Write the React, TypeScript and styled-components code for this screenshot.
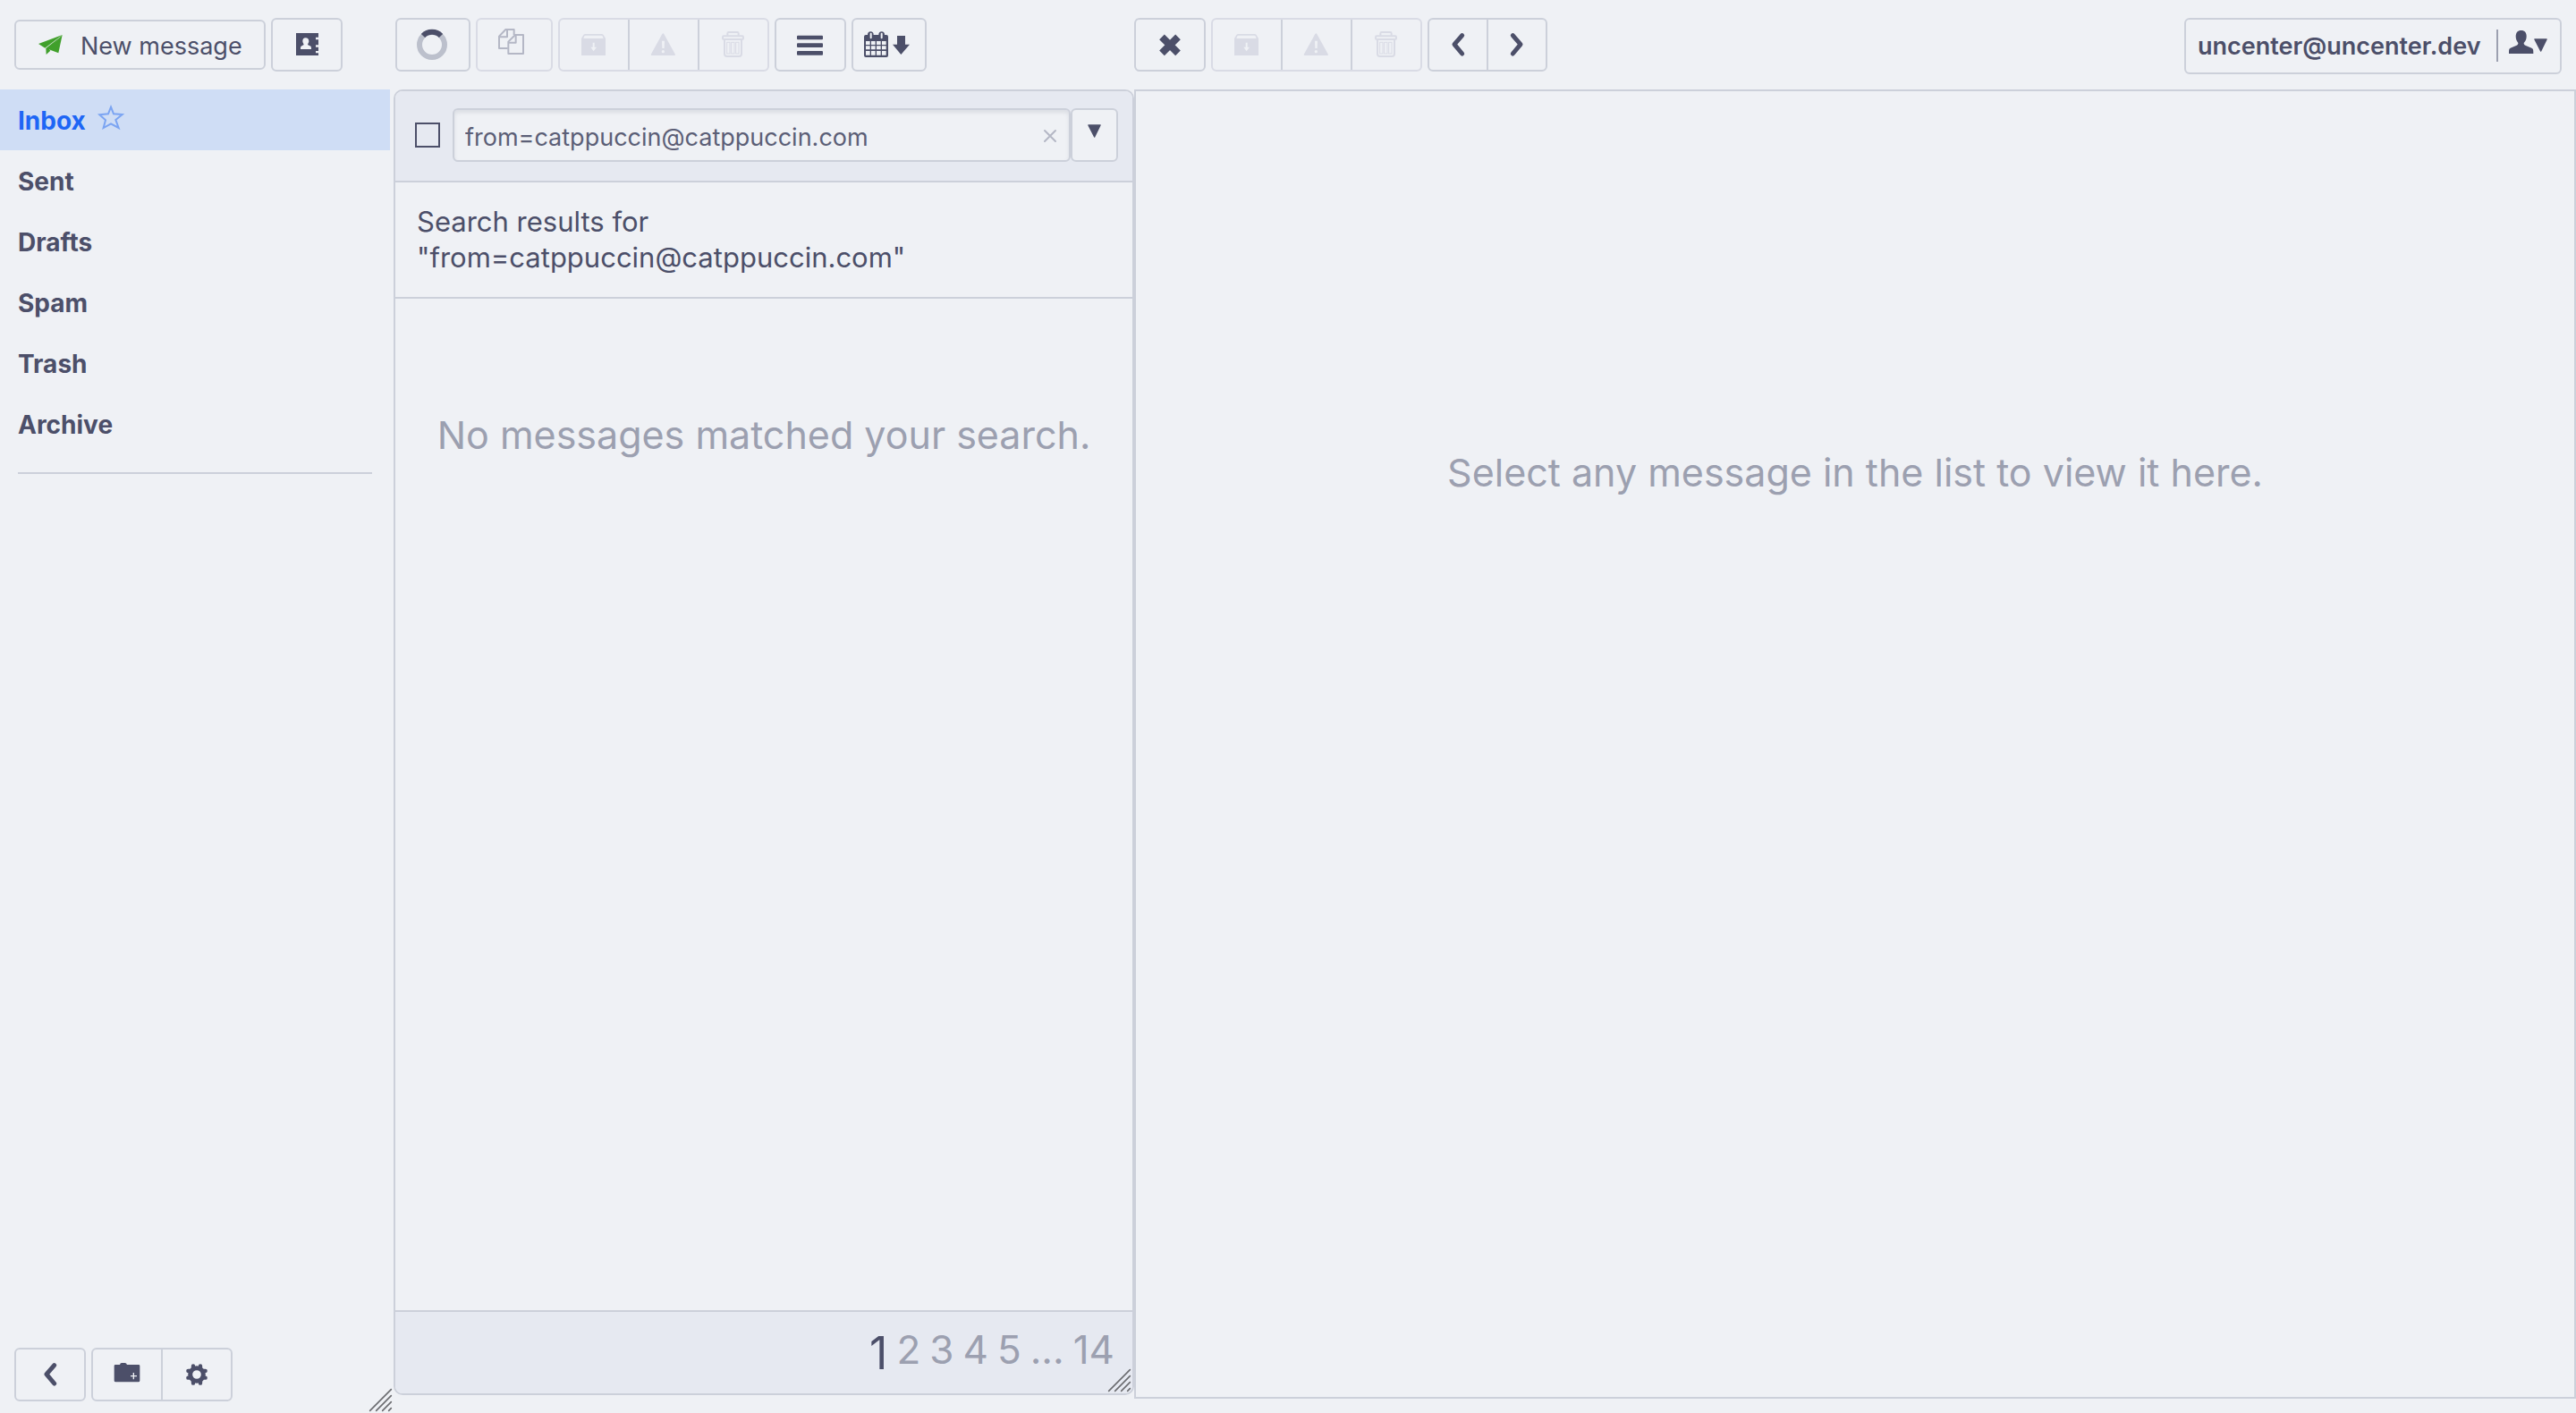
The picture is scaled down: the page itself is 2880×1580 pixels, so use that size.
import React from "react";
import styled, { createGlobalStyle, css } from "styled-components";

const color = {
  base: "#eff1f5",
  mantle: "#e6e9f1",
  border: "#ccd0da",
  faint: "#d9dbe5",
  text: "#4c4f69",
  subtext: "#5c5f77",
  overlay: "#9ca0b0",
  muted: "#b4b7c5",
  blue: "#1e66f5",
  selected: "#cfddf5",
  green: "#40a02b",
};

const GlobalStyle = createGlobalStyle`
  *, *::before, *::after { box-sizing: border-box; }
  html, body, #root { height: 100%; }
  body {
    margin: 0;
    background: ${color.base};
    color: ${color.text};
    font-family: Inter, "Liberation Sans", sans-serif;
    font-size: 27px;
    line-height: 40px;
  }
  button, input { font: inherit; color: inherit; margin: 0; }
  svg { display: block; flex: none; overflow: visible; }
`;

const Page = styled.div`
  display: grid;
  grid-template-columns: 440px 828px minmax(0, 1fr);
  grid-template-rows: 100px minmax(0, 1fr);
  height: 100vh;
`;

const Toolbar = styled.header<{ $inset: number }>`
  display: flex;
  align-items: flex-start;
  gap: 6px;
  padding: 20px 16px 0 ${(p) => p.$inset}px;
`;

const frame = css`
  border: 2px solid ${color.border};
  border-radius: 6px;
  background: ${color.base};
`;

const Button = styled.button<{ $width: number }>`
  ${frame}
  display: flex;
  align-items: center;
  justify-content: center;
  flex: none;
  width: ${(p) => p.$width}px;
  height: 60px;
  padding: 0;
  &:disabled { border-color: ${color.faint}; color: ${color.muted}; }
`;

const ComposeButton = styled.button`
  ${frame}
  display: flex;
  align-items: center;
  gap: 20px;
  width: 281px;
  height: 56px;
  margin-top: 2px;
  padding: 4px 24px 0 25px;
  white-space: nowrap;
  svg { color: ${color.green}; margin-bottom: 4px; }
`;

const Group = styled.div<{ $faint?: boolean }>`
  ${frame}
  display: flex;
  height: 60px;
  border-color: ${(p) => (p.$faint ? color.faint : color.border)};
`;

const Segment = styled.button<{ $width: number }>`
  display: flex;
  align-items: center;
  justify-content: center;
  box-sizing: content-box;
  width: ${(p) => p.$width}px;
  padding: 0;
  border: 0;
  background: none;
  & + & { border-left: 2px solid ${color.border}; }
  &:disabled { color: ${color.faint}; }
`;

const AccountButton = styled.button`
  ${frame}
  display: flex;
  align-items: center;
  justify-content: space-between;
  min-width: 422px;
  height: 63px;
  margin-left: auto;
  padding: 0 14px 0 13px;
  font-weight: 600;
`;

const AccountIcons = styled.span`
  display: flex;
  align-items: center;
  height: 36px;
  margin-bottom: 2px;
  padding-left: 12px;
  border-left: 2px solid ${color.overlay};
  svg:first-child { margin-bottom: 8px; }
`;

const Sidebar = styled.aside`
  position: relative;
  display: flex;
  flex-direction: column;
  width: 436px;
`;

const FolderLink = styled.a<{ $active?: boolean }>`
  display: flex;
  align-items: center;
  gap: 14px;
  height: 68px;
  padding: 2px 20px 0;
  font-size: 28px;
  font-weight: 700;
  text-decoration: none;
  color: ${(p) => (p.$active ? color.blue : color.text)};
  background: ${(p) => (p.$active ? color.selected : "transparent")};
  svg { color: #7ba4f2; margin-bottom: 8px; }
`;

const Rule = styled.hr`
  width: 396px;
  margin: 20px;
  border: 0;
  border-top: 2px solid ${color.border};
`;

const SidebarTools = styled.div`
  display: flex;
  gap: 6px;
  margin-top: auto;
  padding: 0 16px 13px;
`;

const ListPanel = styled.section`
  position: relative;
  display: flex;
  flex-direction: column;
  margin-bottom: 20px;
  border: 2px solid ${color.border};
  border-radius: 10px;
  overflow: hidden;
`;

const SearchBar = styled.form`
  display: flex;
  align-items: center;
  height: 102px;
  padding: 0 16px 2px 22px;
  background: ${color.mantle};
  border-bottom: 2px solid ${color.border};
`;

const Checkbox = styled.input`
  appearance: none;
  flex: none;
  width: 28px;
  height: 28px;
  margin: 0 14px 0 0;
  border: 2px solid ${color.text};
`;

const SearchField = styled.div`
  ${frame}
  display: flex;
  align-items: center;
  flex: 1;
  height: 60px;
  box-shadow: inset 0 3px 4px rgba(76, 79, 105, 0.12);
`;

const SearchInput = styled.input`
  flex: 1;
  min-width: 0;
  height: 100%;
  padding: 4px 0 0 12px;
  border: 0;
  outline: 0;
  background: none;
  color: ${color.subtext};
`;

const ClearButton = styled.button`
  width: 42px;
  height: 56px;
  padding: 2px 14px 0;
  border: 0;
  background: none;
  color: ${color.muted};
`;

const ResultsHeading = styled.h2`
  margin: 0;
  padding: 24px;
  border-bottom: 2px solid ${color.border};
  font-size: 31px;
  font-weight: 400;
  line-height: 40px;
`;

const Placeholder = styled.p<{ $top: number }>`
  flex: 1;
  margin: 0;
  padding-top: ${(p) => p.$top}px;
  text-align: center;
  color: ${color.overlay};
  font-size: 43px;
  line-height: 60px;
`;

const Pager = styled.nav`
  display: flex;
  justify-content: flex-end;
  gap: 10px;
  height: 93px;
  padding: 12px 20px 0;
  border-top: 2px solid ${color.border};
  background: ${color.mantle};
  line-height: 60px;
`;

const PageLink = styled.a<{ $current?: boolean }>`
  color: ${(p) => (p.$current ? color.text : color.overlay)};
  font-size: ${(p) => (p.$current ? 50 : 44)}px;
  padding-top: ${(p) => (p.$current ? 4 : 0)}px;
  text-decoration: none;
`;

const Preview = styled.main`
  display: flex;
  margin-bottom: 16px;
  border: 2px solid ${color.border};
`;

const GripCorner = styled.span<{ $right: number }>`
  position: absolute;
  right: ${(p) => p.$right}px;
  bottom: 2px;
`;

/* Icons are drawn on a grid of three units to the pixel. */
type IconProps = { box: string; w?: number; h?: number; children: React.ReactNode };
const Icon = ({ box, w = 36, h = 36, children }: IconProps) => (
  <svg width={w} height={h} viewBox={box} fill="currentColor" aria-hidden="true">
    {children}
  </svg>
);

const PlaneIcon = () => (
  <Icon box="128 117 81 66" w={27} h={22}>
    <path d="M128 147 208 117 150 161Z" />
    <path d="M208 117 195 178 161 165Z" />
    <path d="M153 162 202 123 164 166 168 170 154 183Z" />
  </Icon>
);

const AddressBookIcon = () => (
  <Icon box="975 96 108 108">
    <path
      fillRule="evenodd"
      d="M993 111h75v14h-9v8h9v18h-9v7h9v13h-9v7h9v8h-75ZM1025 127c-7 0-10 5-10 11 0 5 3 8 4 12l-9 5c-2 2-2 5-2 10h36c0-5 0-8-2-10l-10-5c1-4 4-7 4-12 0-6-4-11-11-11Z"
    />
  </Icon>
);

const StarIcon = () => (
  <Icon box="330 354 84 78" w={28} h={26}>
    <path
      d="M372 359 381 382 410 384 388 402 398 429 372 415 347 429 354 403 334 385 363 382Z"
      fill="none"
      stroke="currentColor"
      strokeWidth="6"
    />
  </Icon>
);

const SpinnerIcon = () => (
  <Icon box="108 96 108 108">
    <circle cx="159" cy="150" r="42" fill="none" stroke="#bcc0cc" strokeWidth="18" />
    <path d="M129 120a42 42 0 0 1 60 0" fill="none" stroke="currentColor" strokeWidth="18" />
  </Icon>
);

const CopyIcon = () => (
  <Icon box="381 96 108 108">
    <g fill="none" stroke="currentColor" strokeWidth="6" strokeLinejoin="round">
      <path d="M413 162H384V122L406 99H434V117" />
      <path d="M386 124H411V101" />
      <path d="M438 117H465V180H415V140Z" />
      <path d="M417 143H440V119" />
    </g>
  </Icon>
);

const ArchiveIcon = () => (
  <Icon box="648 96 108 108">
    <path
      fillRule="evenodd"
      d="M660 129 667 117q2-3 6-3h55q4 0 6 3l7 12v57h-81ZM667 129q1-3 3-8 1-2 4-2h52q4 0 5 2l3 8ZM698 143h6v15h7l-10 14-10-14h7Z"
    />
  </Icon>
);

const WarningIcon = () => (
  <Icon box="882 96 108 108">
    <path
      fillRule="evenodd"
      d="M931 114q3-4 6 0l38 69q0 3-3 3h-76q-3 0-3-3ZM930 137h9l-1 25h-7ZM934 168a5 5 0 1 1 0 10 5 5 0 1 1 0-10Z"
    />
  </Icon>
);

const TrashIcon = () => (
  <Icon box="1116 96 108 108">
    <g fill="none" stroke="currentColor" strokeWidth="6" strokeLinejoin="round">
      <path d="M1150 119V112q0-4 4-4h29q4 0 4 4v7" />
      <rect x="1134" y="121" width="69" height="11" rx="4" />
      <path d="M1140 134V181q0 8 8 8h41q8 0 8-8V134" />
    </g>
    <g fill="none" stroke="currentColor" strokeWidth="3">
      <rect x="1148" y="142" width="10" height="38" />
      <rect x="1163" y="142" width="10" height="38" />
      <rect x="1178" y="142" width="10" height="38" />
    </g>
  </Icon>
);

const MenuIcon = () => (
  <Icon box="144 96 108 108">
    <rect x="153" y="119" width="87" height="14" rx="3" />
    <rect x="153" y="145" width="87" height="14" rx="3" />
    <rect x="153" y="171" width="87" height="14" rx="3" />
  </Icon>
);

const CalendarSortIcon = () => (
  <Icon box="378 96 168 108" w={56}>
    <path
      fillRule="evenodd"
      d="M384 117h6q0-11 10-11t10 11h17q0-11 10-11t10 11h6q6 0 6 6v63q0 6-6 6h-69q-6 0-6-6v-63q0-6 6-6ZM398 113v14q0 3 3 3t3-3v-14q0-3-3-3t-3 3ZM434 113v14q0 3 3 3t3-3v-14q0-3-3-3t-3 3ZM384 138v12h14v-12ZM402 138v12h14v-12ZM420 138v12h14v-12ZM438 138v12h14v-12ZM384 154v12h14v-12ZM402 154v12h14v-12ZM420 154v12h14v-12ZM438 154v12h14v-12ZM384 171v14h14v-14ZM402 171v14h14v-14ZM420 171v14h14v-14ZM438 171v14h14v-14Z"
    />
    <path d="M489 120h27v29h15L502 183 474 149h15Z" />
  </Icon>
);

const CrossIcon = () => (
  <Icon box="0 0 108 108">
    <path
      d="M27 28 81 82M81 28 27 82"
      stroke="currentColor"
      strokeWidth="24"
    />
  </Icon>
);

const ChevronIcon = ({ forward }: { forward?: boolean }) => (
  <Icon box="0 0 108 108">
    <path
      d={forward ? "M40 23 66 53 40 84" : "M68 23 42 53 68 84"}
      fill="none"
      stroke="currentColor"
      strokeWidth="15"
      strokeLinecap="round"
      strokeLinejoin="round"
    />
  </Icon>
);

const FolderAddIcon = () => (
  <Icon box="372 177 108 108">
    <path
      fillRule="evenodd"
      d="M387 198h15q1-6 6-6h11q5 0 7 6h39q4 0 4 4v49q0 5-5 5h-76q-5 0-5-5v-49q0-4 4-4ZM446 225v9h-8v4h8v9h4v-9h9v-4h-9v-9Z"
    />
  </Icon>
);

const GearIcon = () => (
  <Icon box="606 177 108 108">
    <circle cx="660" cy="231" r="22" fill="none" stroke="currentColor" strokeWidth="15" />
    <g stroke="currentColor" strokeWidth="13" strokeLinecap="round">
      <path d="M648 202v8M672 202v8M648 260v-8M672 260v-8M631 219h9M631 242h9M689 219h-9M689 242h-9" />
    </g>
  </Icon>
);

const TriangleIcon = () => (
  <Icon box="0 0 45 45" w={15} h={15}>
    <path d="M2 1H43q2 1 1 3L25 43q-2 3-4 0L1 4q-1-2 1-3Z" />
  </Icon>
);

const PersonIcon = () => (
  <Icon box="1155 102 84 78" w={28} h={26}>
    <path d="M1196 102c-12 0-18 8-18 20 0 10 4 16 8 22 0 4-1 6-5 8l-21 9c-5 3-5 6-5 19h82c0-13 0-16-6-19l-21-9c-4-2-5-4-5-8 5-6 9-12 9-22 0-12-6-20-18-20Z" />
  </Icon>
);

const ClearIcon = () => (
  <Icon box="0 0 42 42" w={14} h={14}>
    <path d="M3 3 39 39M39 3 3 39" stroke="currentColor" strokeWidth="6" strokeLinecap="round" />
  </Icon>
);

const Grip = ({ right }: { right: number }) => (
  <GripCorner $right={right}>
    <Icon box="0 0 75 75" w={25} h={25}>
      <path
        d="M2 73 73 2M23 73 73 23M44 73 73 44M65 73 73 65"
        stroke="#6c6d71"
        strokeWidth="5"
        strokeLinecap="round"
      />
    </Icon>
  </GripCorner>
);

const DropButton = styled(Button)`
  svg { margin-bottom: 10px; }
`;

const MessageActions = () => (
  <Group $faint>
    <Segment $width={76} disabled aria-label="Archive"><ArchiveIcon /></Segment>
    <Segment $width={76} disabled aria-label="Spam"><WarningIcon /></Segment>
    <Segment $width={76} disabled aria-label="Delete"><TrashIcon /></Segment>
  </Group>
);

const folders = ["Inbox", "Sent", "Drafts", "Spam", "Trash", "Archive"];
const pages = ["1", "2", "3", "4", "5", "...", "14"];

export default function App() {
  return (
    <>
      <GlobalStyle />
      <Page>
        <Toolbar $inset={16}>
          <ComposeButton><PlaneIcon />New message</ComposeButton>
          <Button $width={80} aria-label="Contacts"><AddressBookIcon /></Button>
        </Toolbar>
        <Toolbar $inset={2}>
          <Button $width={84} aria-label="Refresh"><SpinnerIcon /></Button>
          <Button $width={86} disabled aria-label="Copy or move"><CopyIcon /></Button>
          <MessageActions />
          <Button $width={80} aria-label="More"><MenuIcon /></Button>
          <Button $width={84} aria-label="Sort by date"><CalendarSortIcon /></Button>
        </Toolbar>
        <Toolbar $inset={0}>
          <Button $width={80} aria-label="Close"><CrossIcon /></Button>
          <MessageActions />
          <Group>
            <Segment $width={64} aria-label="Previous"><ChevronIcon /></Segment>
            <Segment $width={64} aria-label="Next"><ChevronIcon forward /></Segment>
          </Group>
          <AccountButton>
            uncenter@uncenter.dev
            <AccountIcons><PersonIcon /><TriangleIcon /></AccountIcons>
          </AccountButton>
        </Toolbar>

        <Sidebar>
          <nav>
            {folders.map((name, i) => (
              <FolderLink key={name} href="#" $active={i === 0}>
                {name}
                {i === 0 && <StarIcon />}
              </FolderLink>
            ))}
          </nav>
          <Rule />
          <SidebarTools>
            <Button $width={80} aria-label="Collapse"><ChevronIcon /></Button>
            <Group>
              <Segment $width={76} aria-label="New folder"><FolderAddIcon /></Segment>
              <Segment $width={76} aria-label="Settings"><GearIcon /></Segment>
            </Group>
          </SidebarTools>
          <Grip right={-2} />
        </Sidebar>

        <ListPanel>
          <SearchBar>
            <Checkbox type="checkbox" aria-label="Select all" />
            <SearchField>
              <SearchInput aria-label="Search" defaultValue="from=catppuccin@catppuccin.com" />
              <ClearButton type="button" aria-label="Clear"><ClearIcon /></ClearButton>
            </SearchField>
            <DropButton type="button" $width={53} aria-label="Search options"><TriangleIcon /></DropButton>
          </SearchBar>
          <ResultsHeading>
            Search results for
            <br />
            "from=catppuccin@catppuccin.com"
          </ResultsHeading>
          <Placeholder $top={122}>No messages matched your search.</Placeholder>
          <Pager>
            {pages.map((label, i) => (
              <PageLink key={label} href="#" $current={i === 0}>{label}</PageLink>
            ))}
          </Pager>
          <Grip right={2} />
        </ListPanel>

        <Preview>
          <Placeholder $top={396}>Select any message in the list to view it here.</Placeholder>
        </Preview>
      </Page>
    </>
  );
}
